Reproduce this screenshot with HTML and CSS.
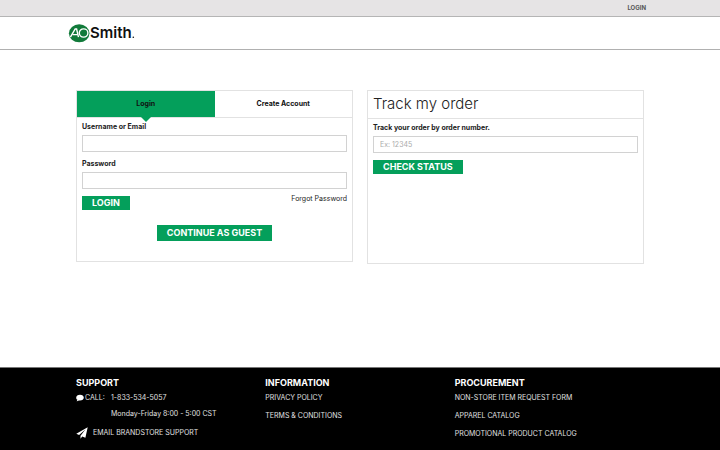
FILE: index.html
```html
<!DOCTYPE html>
<html lang="en">
<head>
<meta charset="utf-8">
<meta name="viewport" content="width=device-width, initial-scale=1">
<title>AO Smith – Login</title>
<link rel="stylesheet" href="styles.css">
</head>
<body>
<div class="topbar"><a href="#login">LOGIN</a></div>
<header class="header">
  <a class="logo" href="#">
    <svg width="68" height="20" viewBox="0 0 68 20" role="img" aria-label="AO Smith">
      <ellipse cx="11.200" cy="10.300" rx="10.300" ry="9" fill="#117a3a"/>
      <path d="M2.400 14.200 7.200 6h1.400l1.900 8.200M4.800 11.600h5" fill="none" stroke="#fff" stroke-width="1.400"/>
      <ellipse cx="15.600" cy="10" rx="4.300" ry="4.100" fill="#117a3a" stroke="#fff" stroke-width="1.400"/>
      <text class="logo-word" x="22" y="15">Smith</text>
      <circle cx="65.300" cy="14.300" r=".8" fill="#111"/>
    </svg>
  </a>
</header>
<main class="main">
  <section class="panel">
    <div class="tabs">
      <button class="tab tab-active" type="button">Login</button>
      <button class="tab" type="button">Create Account</button>
    </div>
    <form class="form login-form" id="login">
      <label for="user">Username or Email</label>
      <input id="user" type="text">
      <label class="next-label" for="password">Password</label>
      <input id="password" type="password">
      <div class="actions">
        <button class="btn" type="button">LOGIN</button>
        <a class="forgot" href="#">Forgot Password</a>
      </div>
      <button class="btn btn-guest" type="button">CONTINUE AS GUEST</button>
    </form>
  </section>
  <section class="panel track">
    <h1>Track my order</h1>
    <form class="form">
      <label for="order">Track your order by order number.</label>
      <input id="order" type="text" placeholder="Ex: 12345">
      <div class="actions">
        <button class="btn" type="button">CHECK STATUS</button>
      </div>
    </form>
  </section>
</main>
<footer class="footer">
  <div class="footer-inner">
    <section>
      <h2>SUPPORT</h2>
      <div class="call">
        <svg width="8" height="8" viewBox="0 0 8 8" aria-hidden="true"><path d="M4 .8C1.800.8.2 2 .2 3.700c0 .9.5 1.600 1.200 2.100-.1.600-.4 1-.8 1.400 1 0 1.700-.4 2.200-.8l1.200.1c2.200 0 3.800-1.200 3.800-2.800S6.200.8 4 .8z" fill="#fff"/></svg>
        <span>CALL:</span>
        <a class="phone" href="tel:18335345057">1-833-534-5057</a>
        <span class="hours">Monday-Friday 8:00 - 5:00 CST</span>
      </div>
      <a class="email" href="#">
        <svg width="12" height="12" viewBox="0 0 12 12" aria-hidden="true"><path d="M11.700.3.300 6.800l2.800 1.200 6.300-5.500-4.900 6.200v3l1.700-2.200 3.200 1.300z" fill="#fff"/></svg>
        <span>EMAIL BRANDSTORE SUPPORT</span>
      </a>
    </section>
    <section>
      <h2>INFORMATION</h2>
      <ul>
        <li><a href="#">PRIVACY POLICY</a></li>
        <li><a href="#">TERMS &amp; CONDITIONS</a></li>
      </ul>
    </section>
    <section>
      <h2>PROCUREMENT</h2>
      <ul>
        <li><a href="#">NON-STORE ITEM REQUEST FORM</a></li>
        <li><a href="#">APPAREL CATALOG</a></li>
        <li><a href="#">PROMOTIONAL PRODUCT CATALOG</a></li>
      </ul>
    </section>
  </div>
</footer>
</body>
</html>
```

FILE: styles.css
```css
* {
  box-sizing: border-box;
}

body {
  margin: 0;
  min-height: 100vh;
  display: flex;
  flex-direction: column;
  background: #fff;
  color: #222;
  font: 7px/10px Inter, "Liberation Sans", sans-serif;
}

a {
  color: inherit;
  text-decoration: none;
}

button,
input {
  font: inherit;
}

h1,
h2,
ul {
  margin: 0;
  padding: 0;
}

ul {
  list-style: none;
}

.topbar {
  height: 17px;
  padding: 3px 74px 0;
  background: #e6e4e5;
  border-bottom: 1px solid #b5b5b5;
  color: #555;
  font-size: 6px;
  font-weight: 700;
  text-align: right;
}

.header {
  height: 33px;
  padding: 6px 68px 0;
  border-bottom: 1px solid #b0b0b0;
}

.logo {
  display: inline-block;
}

.logo svg {
  display: block;
}

.logo-word {
  fill: #111;
  font: 600 15px Inter, sans-serif;
}

.main {
  flex: 1;
  display: grid;
  grid-template-columns: 1fr 1fr;
  gap: 14px;
  align-items: start;
  padding: 40px 76px;
}

.panel {
  border: 1px solid #e2e2e2;
}

.tabs {
  display: flex;
  height: 27px;
  border-bottom: 1px solid #e2e2e2;
}

.tab {
  position: relative;
  flex: 1;
  height: 26px;
  margin: 0;
  padding: 0;
  border: 0;
  background: transparent;
  color: #111;
  font-weight: 700;
}

.tab-active {
  background: #049f5b;
}

.tab-active::after {
  content: "";
  position: absolute;
  top: 100%;
  left: 50%;
  margin-left: -5px;
  border: 5px solid transparent;
  border-top-color: #049f5b;
  border-bottom: 0;
}

.form {
  display: flex;
  flex-direction: column;
  padding: 4px 5px;
}

.form label {
  margin-bottom: 3px;
  font-weight: 700;
}

.form .next-label {
  margin-top: 7px;
}

.form input {
  width: 100%;
  height: 17px;
  padding: 0 6px;
  border: 1px solid #d2d2d2;
  background: #fff;
}

.form input::placeholder {
  color: #aaa;
  opacity: 1;
}

.actions {
  display: flex;
  justify-content: space-between;
  align-items: flex-start;
  margin-top: 7px;
}

.forgot {
  line-height: 6px;
}

.btn {
  height: 14px;
  padding: 0 10px;
  border: 0;
  background: #049f5b;
  color: #fff;
  font-size: 9px;
  font-weight: 700;
}

.btn-guest {
  align-self: center;
  height: 16px;
  margin-top: 15px;
}

.login-form {
  padding-bottom: 20px;
}

.track {
  min-height: 174px;
}

.track h1 {
  height: 28px;
  padding: 0 5px;
  border-bottom: 1px solid #e2e2e2;
  font-size: 15px;
  font-weight: 300;
  line-height: 25px;
}

.footer {
  min-height: 83px;
  padding: 10px 76px;
  border-top: 1px solid #777;
  background: #000;
  color: #e0e0e0;
}

.footer-inner {
  display: grid;
  grid-template-columns: repeat(3, 1fr);
}

.footer h2 {
  margin-bottom: 5px;
  color: #fff;
  font-size: 9px;
  font-weight: 700;
  line-height: 10px;
}

.footer li {
  margin-bottom: 8px;
}

.footer li:last-child {
  margin-bottom: 0;
}

.call {
  display: grid;
  grid-template-columns: 8px 25px 1fr;
  column-gap: 1px;
  row-gap: 6px;
  align-items: center;
}

.hours {
  grid-column: 3;
}

.email {
  display: flex;
  align-items: center;
  gap: 5px;
  margin-top: 8px;
}
```
